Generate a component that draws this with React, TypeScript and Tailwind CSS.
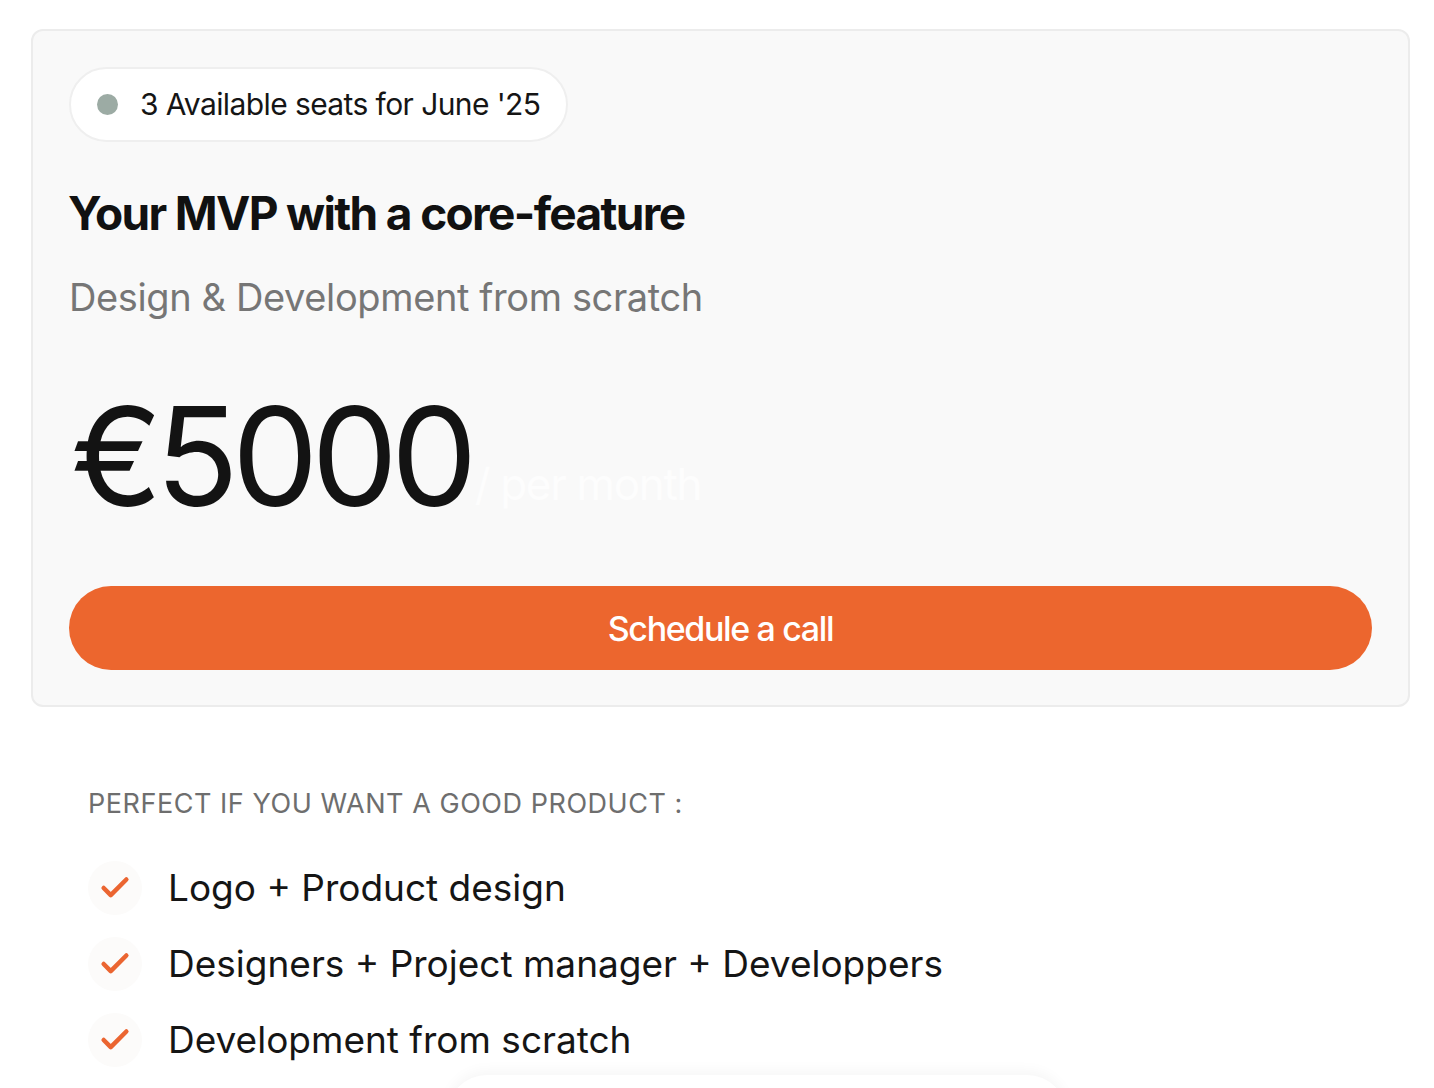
import { Check } from 'lucide-react';

const features = [
    'Logo + Product design',
    'Designers + Project manager + Developpers',
    'Development from scratch',
];

export default function App() {
    return (
        <main
            className="min-h-[1088px] bg-white overflow-hidden"
            style={{ fontFamily: 'Inter, "Noto Sans", sans-serif' }}
        >
            <div className="pt-[29px] pl-[31px] pr-[24px]">
                {/* Offer card */}
                <div className="bg-[#f9f9f9] border-2 border-[#ececec] rounded-[12px] px-[36px] pt-[36px] pb-[35px]">
                    <div className="inline-flex items-center h-[75px] px-[26px] gap-[22px] bg-white border-2 border-[#efefef] rounded-full">
                        <span className="w-[21px] h-[21px] rounded-full bg-[#9caba4]"></span>
                        <span className="text-[30px] tracking-[-0.02em] text-[#151515]">3 Available seats for June '25</span>
                    </div>

                    <h1 className="mt-[43px] -ml-[1px] text-[46px] leading-[56px] font-bold tracking-[-0.036em] text-[#111]">
                        Your MVP with a core-feature
                    </h1>
                    <p className="mt-[33px] text-[38px] leading-[46px] tracking-[-0.01em] text-[#767676]">
                        Design &amp; Development from scratch
                    </p>

                    <div className="mt-[61px] flex items-end">
                        <span className="ml-[2px] text-[137px] leading-[150px] tracking-[-0.05em] text-[#131313]">€5000</span>
                        <span className="mb-[14px] ml-[4px] text-[44px] tracking-[-0.03em] text-[#fdfdfd]">/ per month</span>
                    </div>

                    <button className="mt-[55px] w-full h-[84px] rounded-full bg-[#ec662e] text-white text-[34px] font-medium tracking-[-0.04em]">
                        Schedule a call
                    </button>
                </div>

                {/* Included items */}
                <div className="mt-[80px] pl-[57px]">
                    <p className="text-[27px] leading-[34px] tracking-[0.02em] text-[#6e6e6e] uppercase">
                        Perfect if you want a good product :
                    </p>
                    <ul className="mt-[40px] flex flex-col gap-[22px]">
                        {features.map((f) => (
                            <li key={f} className="flex items-center gap-[26px] h-[54px]">
                                <span className="w-[54px] h-[54px] rounded-full bg-[#fcfbfa] flex items-center justify-center">
                                    <Check className="w-[34px] h-[34px] text-[#eb6531]" strokeWidth={3.2} />
                                </span>
                                <span className="text-[37px] text-[#151515]">{f}</span>
                            </li>
                        ))}
                    </ul>
                </div>

                <div className="mt-[8px] ml-[416px] w-[620px] h-[40px] rounded-t-[40px] bg-white shadow-[0_-4px_14px_rgba(0,0,0,0.04)]"></div>
            </div>
        </main>
    );
}
